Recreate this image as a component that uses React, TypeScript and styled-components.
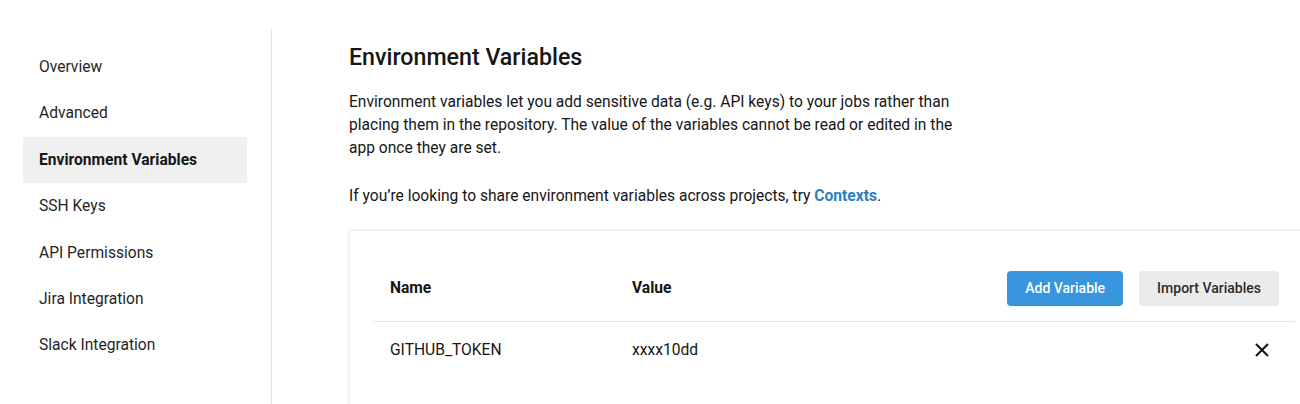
import React from 'react'
import styled, { createGlobalStyle, css } from 'styled-components'

const GlobalStyle = createGlobalStyle`
    body {
        margin: 0;
        overflow: hidden;
        background: #fff;
        font-family: Roboto, "Liberation Sans", Arial, sans-serif;
        color: #161616;
    }
`

const Page = styled.div`
    display: flex;
    width: 1300px;
    height: 404px;
    overflow: hidden;
`

const Sidebar = styled.nav`
    width: 272px;
    flex-shrink: 0;
    margin-top: 29px;
    padding-top: 15px;
    border-right: 1px solid #e3e3e3;
    box-sizing: border-box;
`

type NavItemProps = {
    active?: boolean
}

const NavItem = styled.div<NavItemProps>`
    margin-left: 23px;
    width: 224px;
    height: 46.4px;
    line-height: 47.4px;
    padding-left: 16px;
    box-sizing: border-box;
    font-size: 15.6px;
    color: #1f1f1f;

    ${props => props.active && css`
        background: #f0f0f0;
        font-weight: 700;
        color: #161616;
    `}
`

const Main = styled.main`
    flex: 1;
    padding-left: 77px;
    min-width: 0;
`

const Title = styled.h2`
    margin: 43px 0 0;
    font-size: 23.2px;
    line-height: 28px;
    font-weight: 500;
`

const Text = styled.p`
    margin: 20px 0 0;
    width: 610px;
    font-size: 15.6px;
    line-height: 23px;

    & + & {
        margin-top: 25px;
    }
`

const Link = styled.a`
    color: #2b7fc3;
    font-weight: 700;
    text-decoration: none;
`

const Card = styled.div`
    margin-top: 22px;
    width: 971px;
    height: 300px;
    padding: 23px 24px 0;
    box-sizing: border-box;
    border: 1px solid #ececec;
    border-radius: 4px;
    box-shadow: 0 0 4px rgba(0, 0, 0, 0.06);
`

const Row = styled.div<{ header?: boolean }>`
    display: grid;
    grid-template-columns: 242px 1fr auto;
    align-items: center;
    padding: 0 16px;
    font-size: 15.6px;

    ${props => props.header ? css`
        height: 66px;
        padding-top: 1px;
        border-bottom: 1px solid #e6e6e6;
        font-weight: 700;
    ` : css`
        height: 56px;
    `}
`

const Cell = styled.div`
    white-space: nowrap;
`

const Actions = styled.div`
    display: flex;
    gap: 16px;
`

const Button = styled.button<{ primary?: boolean }>`
    height: 35px;
    border: none;
    border-radius: 4px;
    padding: 0 18px;
    font-family: inherit;
    font-size: 14px;
    font-weight: 500;
    background: #ebebeb;
    color: #2b2b2b;

    ${props => props.primary && css`
        background: #3796de;
        color: #fff;
    `}
`

const DeleteButton = styled.button`
    width: 34px;
    height: 34px;
    padding: 0;
    border: none;
    background: transparent;
    display: flex;
    align-items: center;
    justify-content: center;
`

const navItems = [
    'Overview',
    'Advanced',
    'Environment Variables',
    'SSH Keys',
    'API Permissions',
    'Jira Integration',
    'Slack Integration',
]

const App = () => {
    return (
        <Page>
            <GlobalStyle />
            <Sidebar>
                {navItems.map(item => (
                    <NavItem key={item} active={item === 'Environment Variables'}>{item}</NavItem>
                ))}
            </Sidebar>
            <Main>
                <Title>Environment Variables</Title>
                <Text>
                    Environment variables let you add sensitive data (e.g. API keys) to your jobs rather than
                    placing them in the repository. The value of the variables cannot be read or edited in the
                    app once they are set.
                </Text>
                <Text>
                    If you’re looking to share environment variables across projects, try <Link href="#">Contexts</Link>.
                </Text>
                <Card>
                    <Row header>
                        <Cell>Name</Cell>
                        <Cell>Value</Cell>
                        <Actions>
                            <Button primary>Add Variable</Button>
                            <Button>Import Variables</Button>
                        </Actions>
                    </Row>
                    <Row>
                        <Cell>GITHUB_TOKEN</Cell>
                        <Cell>xxxx10dd</Cell>
                        <DeleteButton aria-label="Remove">
                            <svg width="14" height="14" viewBox="0 0 14 14">
                                <path d="M1 1 L13 13 M13 1 L1 13" stroke="#111" strokeWidth="2" />
                            </svg>
                        </DeleteButton>
                    </Row>
                </Card>
            </Main>
        </Page>
    )
}

export default App
